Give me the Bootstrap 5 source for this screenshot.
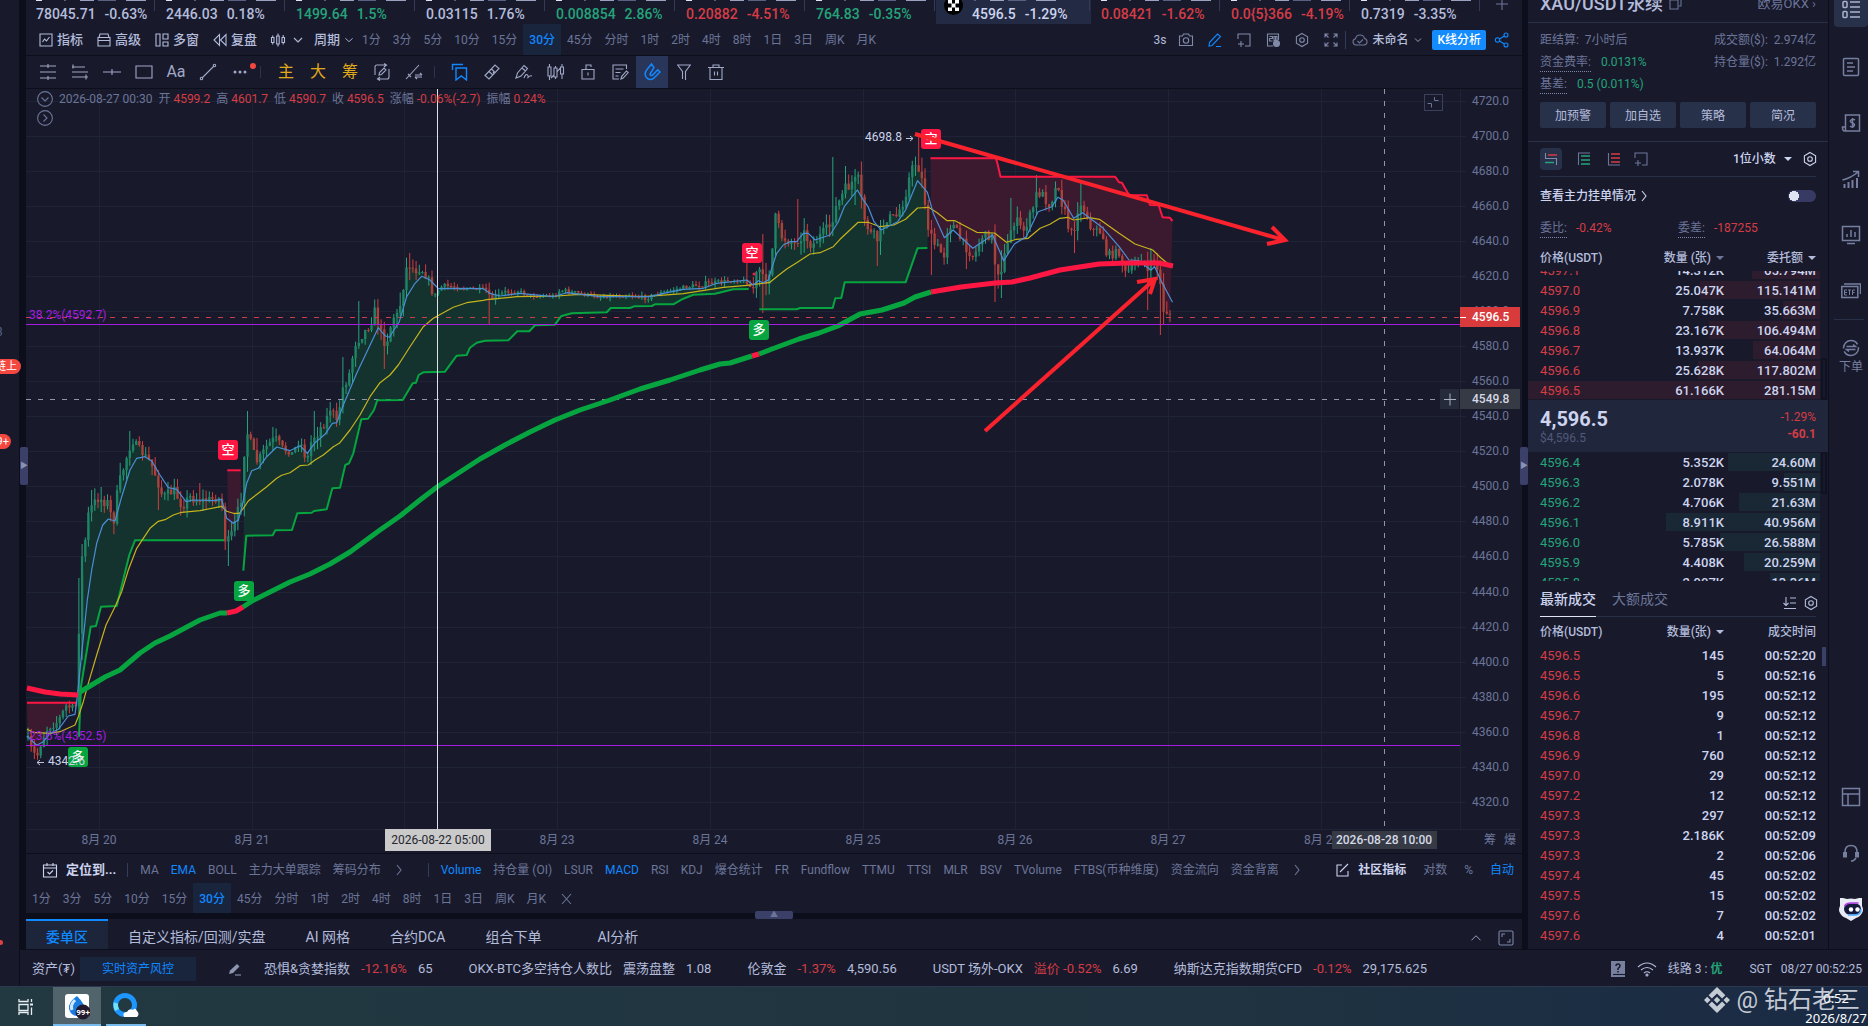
<!DOCTYPE html>
<html lang="zh-CN" data-bs-theme="dark">
<head>
<meta charset="utf-8">
<meta name="viewport" content="width=device-width, initial-scale=1">
<title>XAU/USDT永续</title>
<link rel="stylesheet" href="https://cdn.jsdelivr.net/npm/bootstrap@5.3.0/dist/css/bootstrap.min.css">
<style>
:root{--bg:#181a2c;--gap:#0c0f1b;--line:#28314a;--dim:#6c7598;--txt:#b4bcdb;--lit:#cdd4ef;--blue:#1088ff;--up:#25a37a;--dn:#d63c44}
body{background:var(--gap);color:var(--dim);font:12px/18px Roboto,"Noto Sans CJK SC",sans-serif;height:100vh;overflow:hidden}
button,select{background:none;border:0;padding:0;color:inherit;font:inherit;flex:none}
a{color:inherit;text-decoration:none}
svg.ic{width:16px;height:16px;fill:none;stroke:currentColor;stroke-width:1.1;flex:none;display:block}
.pane{background:var(--bg)}
.up{color:var(--up)!important}.dn{color:var(--dn)!important}.blue{color:var(--blue)!important}.txt{color:var(--txt)}.lit{color:var(--lit)}
.side-l{width:20px;border-right:1px solid var(--gap)}
.gutter{width:6px;flex:none}
.handle{width:8px;height:38px;background:#3b4069;border-radius:2px;top:447px;z-index:4;color:#8b92b5;font-size:8px;line-height:38px;text-align:center}
.over{position:absolute}
/* ticker */
.ticker{height:24px;overflow:hidden}
.tick{flex:0 0 130px;height:24px;padding:5px 0 0 10px;font-size:14px;font-weight:500;color:var(--txt);position:relative;white-space:nowrap}
.tick::before{content:"";position:absolute;left:10px;top:0;width:110px;height:1px;background:linear-gradient(90deg,#dfe4f5 0 6px,transparent 6px 28px,#596182 28px 30px,transparent 30px 44px,#9aa2c0 44px 58px,transparent 58px 62px,#596182 62px 80px,transparent 80px 90px,#9aa2c0 90px)}
.tick::after{content:"";position:absolute;right:1px;top:0;width:1px;height:11px;background:#323a58}
.tick span{margin-left:9px}
.tick.on{flex-basis:155px;background:#232a43;color:var(--lit);padding-left:36px}
.coin{left:8px;top:-4px;width:19px;height:19px}
/* bars */
.bar2{height:32px;border-bottom:1px solid var(--gap)}
.bar3{height:33px;border-bottom:1px solid var(--gap);padding-left:6px}
.menu-b{display:flex;align-items:center;gap:3px;font-size:13px;font-weight:500;color:var(--txt);margin-right:13px}
.per button{padding:1px 6px 0;height:100%}
.per .on,.ind .on{color:var(--blue)}
.per .on{background:#19243d;font-weight:500}
.tbtn{width:32px;height:32px;display:flex;align-items:center;justify-content:center;color:#a0a8c6;font-size:16px}
.tbtn svg.ic{width:18px;height:18px}
.tbtn.on{background:#2a3659;color:var(--blue)}
.tsep{width:10px;height:12px;border-left:1px solid #2c3350}
.vs{width:1px;height:14px;background:#343c5c;flex:none}
.btn-k{background:#148bff;color:#fff;border-radius:2px;height:20px;padding:0 5px;font-weight:500}
/* chart */
.chart{flex:1 1 0;min-height:0;border-bottom:1px solid var(--gap);position:relative}
.chart>svg{position:absolute;inset:0;width:100%;height:100%;font-family:Roboto,"Noto Sans CJK SC",sans-serif;font-size:12px}
.ohlc{left:11px;top:1px;z-index:2;white-space:nowrap}
.ohlc b{font-weight:400;color:var(--dn)}
.ind{height:29px;padding:2px 8px 0 16px}
.ind button{padding:0 6px}
.tabs{height:30px}
.tabs button{padding:6px 20px 0;font-size:14px;height:100%;color:var(--txt)}
.tabs .on{background:#1c2539;color:var(--blue);border-top:2px solid var(--blue);padding-top:4px;font-weight:500}
.status{height:37px;border-top:1px solid var(--gap);font-size:13px;color:var(--txt);white-space:nowrap}
.grp{display:flex;gap:11px;margin-right:36px}
.risk{background:#19243d;color:var(--blue);height:24px;width:116px;font-size:12px}
/* right pane */
.rp{width:300px;flex:none}
.in{padding-left:12px;padding-right:12px}
.hr1{height:1px;background:var(--line)}
.inst{height:22px;overflow:hidden}
.inst h1{font-size:18px;line-height:20px;font-weight:500;margin:-6px 0 0;color:var(--txt)}
.kv{height:22px}
.dot{border-bottom:1px dotted #7d86a6}
.act{flex:1;height:26px;background:#28314a;color:var(--txt);border-radius:2px;padding-top:1px}
.book{width:300px;table-layout:fixed;margin:0;font-size:13px;border-collapse:collapse;color:var(--lit)}
.book td,.book th{padding:2px 0 0;height:20px;line-height:18px;text-align:right;font-weight:400}
.book td:first-child,.book th:first-child{text-align:left;padding-left:12px;width:96px}
.book td:nth-child(2){width:100px;font-weight:500}
.book td:last-child,.book th:last-child{padding-right:12px;width:104px}
.book td:last-child{font-weight:500}
.book th{font-size:12px;height:28px;color:var(--txt);font-weight:500}
.book th:nth-child(2){width:100px}
.ask tr{background:linear-gradient(#2c1c2d,#2c1c2d) no-repeat right 8px center/var(--w) 18px}
.bid tr{background:linear-gradient(#1a2835,#1a2835) no-repeat right 8px center/var(--w) 18px}
.clip{height:129px;overflow:hidden;position:relative}
.mid{height:52px;background:#20263c}
.hd{height:28px;padding-top:2px;color:var(--txt);font-weight:500}
.hd>*:first-child{flex:1}.hd>*:nth-child(2){width:100px;text-align:right}.hd>*:last-child{width:92px;text-align:right}
.caret{display:inline-block;border:4px solid transparent;border-top-color:currentColor;border-bottom:0;vertical-align:2px;margin-left:5px}
.form-check-input.tg{width:28px;height:12px;margin:0;background-color:#373b63;border:0;box-shadow:none;border-radius:6px;background-image:radial-gradient(circle,#dfe3f2 5px,transparent 5px);background-size:12px 12px;background-position:left center;background-repeat:no-repeat}
.dec{color:var(--lit);font-weight:500;appearance:none;width:43px}
.tabs2{height:35px;font-size:14px}
.tabs2 button{height:36px;position:relative}
.tabs2 .on{color:var(--lit);font-weight:500;border-bottom:1px solid #dfe4f5}
.rail{width:40px;border-left:1px solid var(--gap);flex:none;color:#767f9f;padding-left:5px}
.rail button{height:56px;width:34px;display:flex;align-items:center;justify-content:center}
.rail svg.ic{width:20px;height:20px;stroke-width:1.5}
.rail .on{height:27px;background:#28314a;border-radius:0 0 4px 4px;padding-bottom:8px;color:#aab2d0}
.task{height:40px;background:linear-gradient(90deg,#223941,#203540 45%,#1f3340 65%,#1a2a45);border-top:1px solid #2a3850}
.app{width:48px;height:39px;display:flex;align-items:center;justify-content:center;border-bottom:2px solid #76b9ed}
.wm{right:8px;top:-7px;font-size:24px;line-height:40px;color:rgba(235,238,245,.82);white-space:nowrap}
.clock{right:1px;top:1px;color:#fff;font:13px/20px "Noto Sans",sans-serif}
.pill{background:#f4473f;color:#fff;border-radius:0 8px 8px 0;font-size:11px;line-height:15px;height:15px;padding-right:4px;overflow:hidden;display:flex;justify-content:flex-end;white-space:nowrap;left:0}
</style>
<script src="https://cdn.jsdelivr.net/npm/bootstrap@5.3.0/dist/js/bootstrap.bundle.min.js"></script>
</head>
<body class="d-flex flex-column">
<svg width="0" height="0" class="position-absolute" aria-hidden="true">
 <symbol id="i-ind" viewBox="0 0 16 16"><path d="M2 2h12v12H2zM4.500 10l2-3 2 2 3-4"/></symbol>
 <symbol id="i-adv" viewBox="0 0 16 16"><path d="M2 5.500h12V14H2zM3 5.500L4 2h8l1 3.500M2 8.500h12"/></symbol>
 <symbol id="i-win" viewBox="0 0 16 16"><path d="M2 2h4v12H2zM9 2h5v5H9zM9 10h5v4H9z"/></symbol>
 <symbol id="i-rew" viewBox="0 0 16 16"><path d="M7.500 2.500v11L2 8zM14 2.500v11L8.500 8z"/></symbol>
 <symbol id="i-cdl" viewBox="0 0 16 16"><path d="M1.500 5.500h2.500v5H1.500zM2.700 3.500v2M2.700 10.500v2M6.700 4h2.500v8H6.700zM8 1.500V4M8 12v2.500M12 5.500h2.500v5H12zM13.200 3v2.500M13.200 10.500v2"/></symbol>
 <symbol id="i-dn" viewBox="0 0 16 16"><path d="M4 6l4 4 4-4"/></symbol>
 <symbol id="i-rt" viewBox="0 0 16 16"><path d="M6 3l4 5-4 5"/></symbol>
 <symbol id="i-upc" viewBox="0 0 16 16"><path d="M2 11l6-6 6 6"/></symbol>
 <symbol id="i-cam" viewBox="0 0 16 16"><path d="M1.500 4h3l1-2h5l1 2h3v9.500h-13z"/><circle cx="8" cy="8.500" r="2.700"/></symbol>
 <symbol id="i-pen" viewBox="0 0 16 16"><path d="M2.500 10.500l8-8.500 3 2.500-8.500 9-3 .5zM9 14.500h5"/></symbol>
 <symbol id="i-add" viewBox="0 0 16 16"><path d="M2 7V2h12v12H9M5 9v6M2 12h6"/></symbol>
 <symbol id="i-dan" viewBox="0 0 16 16"><path d="M13.500 8V2h-11v12H8M4.500 4.500h3v2h-3v2.500h3M9 4.500h3v4H9zM10.500 4v6"/><circle cx="11.500" cy="11.500" r="3" fill="currentColor"/></symbol>
 <symbol id="i-hex" viewBox="0 0 16 16"><path d="M8 1.500l5.600 3.200v6.600L8 14.500l-5.600-3.200V4.700z"/><circle cx="8" cy="8" r="2.300"/></symbol>
 <symbol id="i-ful" viewBox="0 0 16 16"><path d="M2 5.500V2h3.500M2 2l3.500 3.500M10.500 2H14v3.500M14 2l-3.500 3.500M2 10.500V14h3.500M2 14l3.500-3.500M14 10.500V14h-3.500M14 14l-3.500-3.500"/></symbol>
 <symbol id="i-cld" viewBox="0 0 16 16"><path d="M4 13a3.200 3.200 0 01-.5-6.300 4.600 4.600 0 019-.2A3.300 3.300 0 0112 13zM5.500 9l2 2 3.500-3.500"/></symbol>
 <symbol id="i-shr" viewBox="0 0 16 16"><circle cx="3.500" cy="8" r="2.200"/><circle cx="12" cy="3" r="2"/><circle cx="12" cy="13" r="2"/><path d="M5.500 7l4.800-3M5.500 9l4.800 3"/></symbol>
 <symbol id="t1" viewBox="0 0 18 18"><path d="M1 3h16M1 9h16M1 15h16M9 1v4M9 13v4"/></symbol>
 <symbol id="t2" viewBox="0 0 18 18"><path d="M1 4h13M1 9h16M1 14h16M15 11.500v5M2 1.500v4"/></symbol>
 <symbol id="t3" viewBox="0 0 18 18"><path d="M0 9h18M9 6v6"/></symbol>
 <symbol id="t4" viewBox="0 0 18 18"><path d="M1 3h16v12H1z"/></symbol>
 <symbol id="t6" viewBox="0 0 18 18"><path d="M3 15L15 3"/><circle cx="2.500" cy="15.500" r="1.200"/><circle cx="15.500" cy="2.500" r="1.200"/></symbol>
 <symbol id="t7" viewBox="0 0 18 18"><g fill="currentColor" stroke="none"><circle cx="4" cy="9" r="1.500"/><circle cx="9" cy="9" r="1.500"/><circle cx="14" cy="9" r="1.500"/></g></symbol>
 <symbol id="t8" viewBox="0 0 18 18"><path d="M2 12V4q0-2 2-2h9M11 .5L13.500 2 11 4M16 6v8q0 2-2 2H5M7 14l-2.500 2L7 17.500M6 12l.5-2.500L11 5l2 2-4.500 4.500z"/></symbol>
 <symbol id="t9" viewBox="0 0 18 18"><path d="M1 16L14 2M3 11l3 3M10 12h7M15 10l2 2M17 14h-7M12 16l-2-2"/></symbol>
 <symbol id="t10" viewBox="0 0 18 18"><path stroke-width="1.400" d="M1.500 7V1.500H12M5 5h10.500v12l-5.200-4L5 17z"/></symbol>
 <symbol id="t11" viewBox="0 0 18 18"><path d="M2 12.500L12 2l4 3.500L6 16zM8.500 6l3.500 3.500M6 8.500l4 3.500M10 10l1-1"/></symbol>
 <symbol id="t12" viewBox="0 0 18 18"><path d="M1 15l1.500-5L9 2.500l3.500 3L6 13zM7 5l3.500 3M9 15q2-5 3.500-3t0 3q2-3 4.500-2"/></symbol>
 <symbol id="t13" viewBox="0 0 18 18"><path d="M1 4h3v9H1zM2.500 1v3M2.500 13v4M7 5h3v9H7zM8.500 3v2M8.500 14v2M13.500 4h3v7h-3zM15 1v3M15 11v5M4 15l3-3M10 9l4-5"/></symbol>
 <symbol id="t14" viewBox="0 0 18 18"><path d="M3 6.500h12V16H3zM7 6.500V2h5v2M9 9.500v3"/></symbol>
 <symbol id="t15" viewBox="0 0 18 18"><path d="M15.500 6V2H2v14h6M4.500 6h8M4.500 9.500h5M4.500 13h3M10 16l.7-2.700L15.500 8l1.700 1.600-5 5.400z"/></symbol>
 <symbol id="t16" viewBox="0 0 18 18"><path stroke-width="1.500" d="M8.500 1L4 6.500c-3 3.800-2 7.500.5 9 2.300 1.400 5.200 1 7-1L17 9l-2.200-2.200-5.300 5.300c-1.300 1.200-3.200-.4-2-1.900L11 4.500z"/></symbol>
 <symbol id="t17" viewBox="0 0 18 18"><path d="M2 2h14M3 2.500l4.500 6V16M15 2.500l-4.500 6V17"/></symbol>
 <symbol id="t18" viewBox="0 0 18 18"><path d="M1 4.500h16M6 4.500V2h6v2.500M3 4.500V16.500h12V4.500M7.500 8.500v4M10.500 8.500v4"/></symbol>
 <symbol id="i-cal" viewBox="0 0 16 16"><path d="M1.500 3h13v12h-13zM1.500 6h13M5 1v3M11 1v3M5.500 10l2 2 3.500-3.500"/></symbol>
 <symbol id="i-edt" viewBox="0 0 16 16"><path d="M8 3H3v11h11V9M6 10l8-8"/></symbol>
 <symbol id="i-x" viewBox="0 0 16 16"><path d="M4 3l9 10M13 3L4 13"/></symbol>
 <symbol id="i-box" viewBox="0 0 16 16"><rect x="1" y="1" width="14" height="14" rx="1.500"/><path d="M4 7V4h3M12 9v3H9"/></symbol>
 <symbol id="r1" viewBox="0 0 20 20"><rect x="2" y="1.500" width="4" height="6" rx="1"/><rect x="2" y="11.500" width="4" height="6" rx="1"/><path d="M9 2h10M9 7h10M9 12h10M9 17h10"/></symbol>
 <symbol id="r2" viewBox="0 0 20 20"><rect x="2.500" y="1.500" width="15" height="17" rx="1"/><path d="M6 6h6M6 10h8M6 14h6"/></symbol>
 <symbol id="r3" viewBox="0 0 20 20"><path d="M4.500 14V2h14v16h-15q-2 0-2-4h3v4"/><path d="M14 7q-2-1.500-4 0t1.500 3q3 1 1.500 3t-4 0M11.500 5v10"/></symbol>
 <symbol id="r4" viewBox="0 0 20 20"><path stroke-width="2" d="M3.500 19v-4M7.500 19v-6M11.500 19v-8M16 19V9"/><path d="M1.500 11Q10 9 17 3M12 2.500h5.500V8"/></symbol>
 <symbol id="r5" viewBox="0 0 20 20"><path d="M1.500 1.500h17v14h-17zM6 18.500h8M6 12V9M10 12V5M14 12V7"/></symbol>
 <symbol id="r6" viewBox="0 0 20 20"><path d="M.8 5.500h16v11H.8zM3 3h16.500v10"/><path stroke-width="1" d="M6 9H3.500v5H6M3.500 11.500H6M7 9h3M8.500 9v5M14 9h-2.500v5M11.500 11.500h2"/></symbol>
 <symbol id="r7" viewBox="0 0 20 20"><circle cx="10" cy="10" r="7.500" stroke-dasharray="20 3"/><path d="M5.500 8.500h9l-2.500-2M14.500 11.500h-9l2.500 2"/></symbol>
 <symbol id="r8" viewBox="0 0 20 20"><path d="M1.500 1.500h17v17h-17zM1.500 7h17M7 7v11.500"/></symbol>
 <symbol id="r9" viewBox="0 0 20 20"><path d="M4 9q0-6.500 6-6.500T16 9M15 15q-2 3-5 3"/><path stroke-width="4" d="M4 9v5.500M16 9v5.500"/></symbol>
 <symbol id="r10" viewBox="0 0 24 24"><path fill="#e8ebf5" stroke="none" d="M1 1h3l4 1q4-1 8 0l4-1h3v8q2 4 0 7-2 4-6 5l-5 3-5-3q-4-1-6-5-2-3 0-7z"/><rect x="5" y="6.500" width="17" height="11" rx="5.500" fill="#151a3c" stroke="none"/><path d="M5.500 9q2-3 6-3h8" stroke="#b13ce8" fill="none" stroke-width="1.500"/><path d="M22 12q0 5-5 6h-8" stroke="#4aa8ff" fill="none" stroke-width="1.500"/><circle cx="12" cy="12.500" r="2.200" fill="#fff" stroke="none"/><circle cx="18.500" cy="12.500" r="2.200" fill="#fff" stroke="none"/></symbol>
</svg>

<main class="d-flex flex-fill position-relative" style="min-height:0">
 <aside class="side-l pane position-relative flex-shrink-0">
  <span class="over" style="left:-4px;top:323px;color:#56608c">3</span>
  <span class="over pill" style="width:21px;top:359px">链上</span>
  <span class="over pill" style="width:11px;top:434px;padding-right:2px">9+</span>
  <span class="over" style="left:0;top:940px;width:3px;height:5px;background:#e04040;border-radius:0 3px 3px 0"></span>
 </aside>
 <div class="d-flex flex-column flex-fill" style="min-width:0">
  <div class="d-flex flex-fill" style="min-height:0">
   <div class="gutter position-relative"><div class="handle over" style="left:0">▶</div></div>
   <section class="d-flex flex-column flex-fill" style="min-width:0">
    <div class="pane ticker d-flex" id="ticker"></div>
    <div class="pane bar2 d-flex align-items-center pe-2" style="padding-left:12px">
     <button class="menu-b"><svg class="ic"><use href="#i-ind"/></svg>指标</button>
     <button class="menu-b"><svg class="ic"><use href="#i-adv"/></svg>高级</button>
     <button class="menu-b"><svg class="ic"><use href="#i-win"/></svg>多窗</button>
     <button class="menu-b"><svg class="ic"><use href="#i-rew"/></svg>复盘</button>
     <button class="menu-b me-2 gap-1" aria-label="K线类型"><svg class="ic"><use href="#i-cdl"/></svg><svg class="ic"><use href="#i-dn"/></svg></button>
     <button class="menu-b me-0" style="gap:2px">周期<svg class="ic" style="width:14px"><use href="#i-dn"/></svg></button>
     <div class="per d-flex h-100" data-periods></div>
     <div class="ms-auto d-flex align-items-center gap-3">
      <button class="txt">3s</button>
      <div class="d-flex align-items-center" style="gap:13px;color:#8089a8;margin-left:-4px">
      <button aria-label="截图"><svg class="ic"><use href="#i-cam"/></svg></button>
      <button class="blue" aria-label="画线"><svg class="ic"><use href="#i-pen"/></svg></button>
      <button aria-label="添加"><svg class="ic"><use href="#i-add"/></svg></button>
      <button aria-label="弹幕"><svg class="ic"><use href="#i-dan"/></svg></button>
      <button aria-label="设置"><svg class="ic"><use href="#i-hex"/></svg></button>
      <button aria-label="全屏"><svg class="ic"><use href="#i-ful"/></svg></button>
      </div>
      <button class="d-flex align-items-center gap-1 txt fw-medium" style="margin-left:-10px;padding-left:6px;border-left:1px solid #343c5c"><svg class="ic" style="color:#6c7598"><use href="#i-cld"/></svg>未命名<svg class="ic" style="width:12px"><use href="#i-dn"/></svg></button>
      <button class="btn-k" style="margin-left:-8px">K线分析</button>
      <button class="blue me-1" style="margin-left:-8px" aria-label="分享"><svg class="ic"><use href="#i-shr"/></svg></button>
     </div>
    </div>
    <div class="pane bar3 d-flex align-items-center" id="tools"></div>

    <div class="pane chart">
     <svg id="plot" viewBox="26 89 1496 764" preserveAspectRatio="xMinYMin slice" role="img" aria-label="XAU/USDT 30分 K线图"></svg>
     <div class="ohlc over">
      <div class="d-flex align-items-center gap-1"><svg class="ic"><circle cx="8" cy="8" r="7.400"/><path d="M4.500 6.500L8 10l3.500-3.500"/></svg><span style="margin-left:2px">2026-08-27 00:30&nbsp; 开 <b>4599.2</b>&nbsp; 高 <b>4601.7</b>&nbsp; 低 <b>4590.7</b>&nbsp; 收 <b>4596.5</b>&nbsp; 涨幅 <b>-0.06%(-2.7)</b>&nbsp; 振幅 <b>0.24%</b></span></div>
      <svg class="ic" style="margin-top:2px"><circle cx="8" cy="8" r="7.400"/><path d="M6.500 4.500L10 8l-3.500 3.500"/></svg>
     </div>
    </div>

    <div class="pane ind d-flex align-items-center text-nowrap">
     <button class="p-0 d-flex align-items-center gap-2 lit fw-bold" style="font-size:13px"><svg class="ic"><use href="#i-cal"/></svg>定位到...</button>
     <span class="vs" style="margin:0 6px 0 11px"></span>
     <button>MA</button><button class="on">EMA</button><button>BOLL</button><button>主力大单跟踪</button><button>筹码分布</button>
     <button aria-label="更多" class="p-0 ms-1"><svg class="ic"><use href="#i-rt"/></svg></button><span class="vs" style="margin:0 6px 0 21px"></span>
     <div class="d-flex" id="sub"></div>
     <button aria-label="更多" class="p-0 ms-1"><svg class="ic"><use href="#i-rt"/></svg></button>
     <div class="ms-auto d-flex align-items-center" style="gap:7px"><button class="d-flex align-items-center gap-2 lit fw-bold px-0"><svg class="ic"><use href="#i-edt"/></svg>社区指标</button><button class="ms-1">对数</button><button class="px-0 mx-1">%</button><button class="on pe-0">自动</button></div>
    </div>
    <div class="pane per d-flex align-items-center" style="height:30px"><div class="d-flex h-100" data-periods></div><button aria-label="关闭"><svg class="ic"><use href="#i-x"/></svg></button></div>
    <div class="position-relative" style="height:6px"><div class="over" style="left:729px;top:-2px;width:38px;height:8px;background:#3b4069;border-radius:2px;font-size:8px;line-height:8px;text-align:center">▲</div></div>
    <div class="pane tabs d-flex align-items-center">
     <button class="on">委单区</button><button>自定义指标/回测/实盘</button><button>AI 网格</button><button>合约DCA</button><button class="me-3">组合下单</button><button>AI分析</button>
     <div class="ms-auto d-flex pt-2 me-2 txt" style="gap:16px"><svg class="ic" style="width:12px"><use href="#i-upc"/></svg><svg class="ic" style="color:#7d86a6"><use href="#i-box"/></svg></div>
    </div>
   </section>
   <div class="gutter position-relative"><div class="handle over" style="right:0">▶</div></div>

   <section class="rp pane d-flex flex-column overflow-hidden">
    <div class="inst in d-flex justify-content-between"><div class="d-flex"><h1>XAU/USDT永续</h1><svg class="ic ms-1" style="margin-top:-4px"><path d="M3 4h8v9H3zM6 2h8v8h-2"/></svg></div><a href="#" style="font-size:13px;margin-top:-5px">欧易OKX&nbsp;›</a></div>
    <div class="hr1"></div>
    <div class="in" style="padding-top:6px">
     <div class="kv d-flex align-items-center justify-content-between"><span>距结算:&nbsp; 7小时后</span><span>成交额($):&nbsp; 2.974亿</span></div>
     <div class="kv d-flex align-items-center justify-content-between"><span><span class="dot d-inline-block" style="margin-right:10px">资金费率:</span><span class="up">0.0131%</span></span><span>持仓量($):&nbsp; 1.292亿</span></div>
     <div class="kv d-flex align-items-center"><span class="dot" style="margin-right:10px">基差:</span><span class="up">0.5 (0.011%)</span></div>
     <div class="d-flex gap-1" style="margin:7px 0 13px"><button class="act">加预警</button><button class="act">加自选</button><button class="act">策略</button><button class="act">简况</button></div>
    </div>
    <div class="hr1"></div>
    <div class="in d-flex align-items-center" style="height:34px;gap:14px">
     <button class="rounded-1" style="background:#28314a;padding:3px" aria-label="全部盘口"><svg class="ic"><path d="M2.500 2v5.500h11V14" stroke="#8089a8"/><path d="M5 4h9" stroke="#d63c44" stroke-width="1.500"/><path d="M2 11.500h9" stroke="#25a37a" stroke-width="1.500"/></svg></button>
     <button aria-label="买盘"><svg class="ic"><path d="M14 2H2.500v12"/><path d="M5 5h9M5 9h9M5 13h9" stroke="#25a37a" stroke-width="1.400"/></svg></button>
     <button aria-label="卖盘"><svg class="ic"><path d="M2.500 2v12H14"/><path d="M5 3h9M5 7h9M5 11h9" stroke="#d63c44" stroke-width="1.400"/></svg></button>
     <button style="margin-left:-3px" aria-label="添加"><svg class="ic"><use href="#i-add"/></svg></button>
     <div class="ms-auto d-flex align-items-center lit"><select class="dec" aria-label="小数位数"><option>1位小数</option></select><span class="caret" style="margin:0 10px 0 8px"></span><svg class="ic" style="margin-right:-2px"><use href="#i-hex"/></svg></div>
    </div>
    <div class="hr1" style="margin:0 12px"></div>
    <div class="in d-flex align-items-center justify-content-between" style="height:36px;padding-top:1px"><label for="tg" class="lit fw-medium d-flex align-items-center">查看主力挂单情况<svg class="ic"><use href="#i-rt"/></svg></label><input id="tg" class="form-check-input tg" type="checkbox" role="switch"></div>
    <div class="in d-flex align-items-center" style="height:30px"><span style="width:138px"><span class="dot d-inline-block" style="margin-right:9px">委比:</span><span class="dn">-0.42%</span></span><span><span class="dot d-inline-block" style="margin-right:9px">委差:</span><span class="dn">-187255</span></span></div>
    <div class="in hd d-flex align-items-center"><span>价格(USDT)</span><span>数量 (张)<span class="caret" style="color:#6c7598"></span></span><span>委托额<span class="caret"></span></span></div>
    <div class="clip d-flex align-items-end"><table class="book ask"><tbody id="asks"></tbody></table><span class="over" style="right:1px;top:87px;width:6px;height:42px;border:2px solid #0f1220"></span></div>
    <div class="mid in d-flex justify-content-between align-items-center"><div><div class="lit fw-bold" style="font-size:20px;line-height:24px">4,596.5</div><div style="line-height:14px;font-size:12px;color:#505979">$4,596.5</div></div><div class="dn text-end" style="font-size:12px;line-height:17px">-1.29%<br><b>-60.1</b></div></div>
    <div class="clip"><table class="book bid"><tbody id="bids"></tbody></table><span class="over" style="right:1px;top:0;width:6px;height:42px;border:2px solid #0f1220"></span></div>
    <div class="in"><div class="tabs2 d-flex gap-3"><button class="on">最新成交</button><button>大额成交</button><span class="ms-auto d-flex align-items-center txt pt-2" style="gap:5px;margin-right:-3px"><svg class="ic"><path d="M4 2v8M1.500 8L4 10.500 6.500 8M8 3h6M8 8h6M2 13.500h12"/></svg><svg class="ic"><use href="#i-hex"/></svg></span></div></div>
    <div class="hr1" style="margin:0 12px"></div>
    <div class="position-relative"><table class="book"><thead><tr><th>价格(USDT)</th><th>数量(张)<span class="caret"></span></th><th>成交时间</th></tr></thead><tbody id="trades"></tbody></table><span class="over" style="right:2px;top:30px;width:4px;height:19px;background:#3b4069"></span></div>
   </section>
   <nav class="rail pane d-flex flex-column">
    <button class="on" aria-label="盘口"><svg class="ic"><use href="#r1"/></svg></button>
    <button style="margin-top:12px" aria-label="资讯"><svg class="ic"><use href="#r2"/></svg></button>
    <button aria-label="资金"><svg class="ic"><use href="#r3"/></svg></button>
    <button aria-label="行情"><svg class="ic"><use href="#r4"/></svg></button>
    <button aria-label="数据"><svg class="ic"><use href="#r5"/></svg></button>
    <button aria-label="ETF"><svg class="ic"><use href="#r6"/></svg></button>
    <div class="hr1 me-1"></div>
    <button class="flex-column" style="height:74px"><svg class="ic"><use href="#r7"/></svg><span>下单</span></button>
    <button class="mt-auto" aria-label="布局"><svg class="ic"><use href="#r8"/></svg></button>
    <button aria-label="客服"><svg class="ic"><use href="#r9"/></svg></button>
    <button style="margin-bottom:12px" aria-label="AI助手"><svg class="ic" style="width:24px;height:24px"><use href="#r10"/></svg></button>
   </nav>
  </div>
  <footer class="status pane d-flex align-items-center" style="padding:1px 6px 0 12px">
   <span style="width:48px">资产(₮)</span><button class="risk">实时资产风控</button>
   <svg class="ic" style="margin:0 21px 0 31px;fill:#8d95b3;stroke:#8d95b3"><path d="M2 13l1-3.500L10 3l2.500 2.500L6 12z" stroke="none"/><path d="M8 14h6"/></svg>
   <div class="grp"><span>恐惧&amp;贪婪指数</span><span class="dn">-12.16%</span><span>65</span></div>
   <div class="grp"><span>OKX-BTC多空持仓人数比</span><span>震荡盘整</span><span>1.08</span></div>
   <div class="grp"><span>伦敦金</span><span class="dn">-1.37%</span><span>4,590.56</span></div>
   <div class="grp"><span>USDT 场外-OKX</span><span class="dn">溢价 -0.52%</span><span>6.69</span></div>
   <div class="grp"><span>纳斯达克指数期货CFD</span><span class="dn">-0.12%</span><span>29,175.625</span></div>
   <div class="ms-auto d-flex align-items-center" style="font-size:12px;gap:11px">
    <svg class="ic"><path d="M1 0h14v16H1z" fill="#77809f" stroke="none"/><path d="M3 13.500h12" stroke="#181a2c"/><path d="M6 5q0-2 2-2t2 2q0 1-2 2.500V9M8 10v1.500" stroke="#181a2c" stroke-width="1.500"/></svg>
    <svg class="ic" style="width:20px" viewBox="0 0 20 16"><path d="M1 6q9-8 18 0M4 9q6-5 12 0M7 12q3-2.500 6 0"/><circle cx="10" cy="14" r="1"/></svg>
    <span>线路 3 : <span class="up fw-bold">优</span></span><span class="ms-3">SGT&nbsp;&nbsp; 08/27 00:52:25</span></div>
  </footer>
 </div>
</main>

<footer class="task d-flex position-relative">
 <button class="app border-0" style="width:50px;color:#e6ecf0" aria-label="任务视图"><svg class="ic"><path d="M2 0v2.500h9V0M2 5.500h9v6H2zM2 16v-2.500h9V16M14.500 0v3M14.500 8.500V16" stroke-width="1.300"/><path d="M13 4.500h3v2h-3z" fill="currentColor" stroke="none"/></svg></button>
 <button class="app" style="background:#51646c;margin-left:3px" aria-label="行情软件"><svg width="26" height="28" viewBox="0 0 26 28"><rect x="1" y="2" width="24" height="24" rx="3" fill="#fff"/><path d="M13 4Q4 10 5 17q2 7 8 7t8-6q0-6-8-14z" fill="#1a7be0"/><path d="M11 8q-5 5-3 10" stroke="#cfe6ff" stroke-width="3" fill="none"/><circle cx="19" cy="20" r="7.500" fill="#221a2c"/><text x="19" y="23" font-size="8" font-weight="700" fill="#fff" text-anchor="middle">99+</text></svg></button>
 <button class="app" style="width:40px;margin-left:5px" aria-label="浏览器"><svg width="26" height="26" viewBox="0 0 26 26"><circle cx="12" cy="12" r="9.500" fill="none" stroke="#1e96ff" stroke-width="5"/><path d="M4 17q-2-4-1-7" stroke="#6fe0f5" stroke-width="4.500" fill="none"/><path d="M11 24q-2-5 3-5 2-4 6-2 2-3 4 1 3 3 0 6z" fill="#fff"/></svg></button>
 <div class="over clock text-end"><div style="padding-right:18px">0:52</div><div>2026/8/27</div></div>
 <div class="over wm d-flex align-items-center"><svg width="26" height="26" viewBox="0 0 28 28" fill="currentColor" style="margin-right:6px"><path d="M14 0l9 9-3.500 3.500L14 7l-5.500 5.500L5 9zM14 28l9-9-3.500-3.500L14 21l-5.500-5.500L5 19zM14 10.500l3.500 3.500-3.500 3.500-3.500-3.500zM3.500 10.500L7 14l-3.500 3.500L0 14zM24.500 10.500L28 14l-3.500 3.500L21 14z"/></svg>@ 钻石老三</div>
</footer>

<script>
const $=s=>document.querySelector(s);
/* ticker */
const T=[['78045.71','-0.63%',''],['2446.03','0.18%',''],['1499.64','1.5%','up'],['0.03115','1.76%',''],['0.008854','2.86%','up'],['0.20882','-4.51%','dn'],['764.83','-0.35%','up'],['4596.5','-1.29%','on'],['0.08421','-1.62%','dn'],['0.0{5}366','-4.19%','dn'],['0.7319','-3.35%','']];
$('#ticker').innerHTML=T.map(t=>`<a href="#" class="tick ${t[2]}">${t[2]=='on'?'<svg class="coin over" viewBox="0 0 19 19"><circle cx="9.500" cy="9.500" r="9.500" fill="#000"/><path fill="#fff" d="M4 4h4v3.500H4zM11 4h4v3.500h-4zM7.500 7.500h4v4h-4zM4 11.500h4V15H4zM11 11.500h4V15h-4z"/></svg>':''}${t[0]}<span>${t[1]}</span></a>`).join('')+'<button class="ms-auto h-100" style="margin:-8px 12px 0 0" aria-label="新增"><svg class="ic"><path d="M2 8h12M8 2v12"/></svg></button>';
/* periods */
const P='1分,3分,5分,10分,15分,30分,45分,分时,1时,2时,4时,8时,1日,3日,周K,月K'.split(',');
document.querySelectorAll('[data-periods]').forEach(e=>e.innerHTML=P.map(p=>`<button class="${p=='30分'?'on':''}">${p}</button>`).join(''));
/* drawing tools */
const u=n=>`<svg class="ic"><use href="#t${n}"/></svg>`,y=c=>`<span style="color:#e0a91c">${c}</span>`;
const tools=[u(1),u(2),u(3),u(4),'Aa',u(6),u(7),0,y('主'),y('大'),y('筹'),u(8),u(9),0,u(10),u(11),u(12),u(13),u(14),u(15),u(16),u(17),u(18)];
$('#tools').innerHTML=tools.map((t,i)=>t===0?'<span class="tsep flex-shrink-0 ms-1"></span>':`<button class="tbtn position-relative ${i==20?'on':''} ${i==14?'blue':''}">${t}${i==6?'<i class="over rounded-circle" style="width:6px;height:6px;right:0;top:7px;background:#f4473f"></i>':''}</button>`).join('');
$('#sub').innerHTML='Volume,持仓量 (OI),LSUR,MACD,RSI,KDJ,爆仓统计,FR,Fundflow,TTMU,TTSI,MLR,BSV,TVolume,FTBS(币种维度),资金流向,资金背离'.split(',').map(s=>`<button class="${s=='Volume'||s=='MACD'?'on':''}">${s}</button>`).join('');
/* order book */
const row=(c,w)=>(r)=>`<tr style="--w:${Math.round(parseFloat(r[2])*w)}px"><td class="${c}">${r[0]}</td><td>${r[1]}</td><td>${r[2]}</td></tr>`;
$('#asks').innerHTML=[['4597.1','14.312K','65.794M'],['4597.0','25.047K','115.141M'],['4596.9','7.758K','35.663M'],['4596.8','23.167K','106.494M'],['4596.7','13.937K','64.064M'],['4596.6','25.628K','117.802M'],['4596.5','61.166K','281.15M']].map(row('dn',292/281.15)).join('');
$('#bids').innerHTML=[['4596.4','5.352K','24.60M'],['4596.3','2.078K','9.551M'],['4596.2','4.706K','21.63M'],['4596.1','8.911K','40.956M'],['4596.0','5.785K','26.588M'],['4595.9','4.408K','20.259M'],['4595.8','2.907K','13.36M']].map(row('up',154/40.956)).join('');
$('#trades').innerHTML='4596.5 145 20,4596.5 5 16,4596.6 195 12,4596.7 9 12,4596.8 1 12,4596.9 760 12,4597.0 29 12,4597.2 12 12,4597.3 297 12,4597.3 2.186K 09,4597.3 2 06,4597.4 45 02,4597.5 15 02,4597.6 7 02,4597.6 4 01'.split(',').map(s=>{const[a,b,c]=s.split(' ');return`<tr><td class="dn">${a}</td><td>${b}</td><td>00:52:${c}</td></tr>`}).join('');

/* chart */
const A=(s,ox,oy,sx)=>s.trim().split(' ').map(p=>{const[a,b]=p.split(',');return[ox+a/sx,oy+b/3]});
const a=s=>A(s,0,300,3),b=s=>A(s,350,200,3),c=s=>A(s,700,110,2.529);
const pts=l=>l.map(p=>p[0].toFixed(1)+','+p[1].toFixed(1)).join(' ');
const pl=(l,col,w)=>`<polyline points="${pts(l)}" fill="none" stroke="${col}" stroke-width="${w}" stroke-linejoin="round"/>`;
const G='#07a53f',R='#ff1744';
const yellow=[...a('81,1288 100,1297 150,1300 180,1295 225,1275 235,1250 250,1205 265,1150 290,1065 318,975 345,920 365,875 385,810 410,745 430,715 450,685 475,664 495,659 520,645 545,637 600,632 665,619 680,634 700,640 718,640 730,625 745,603 775,580 800,560 830,535 845,526 870,518 900,497 925,495 945,480 970,465 1000,440 1018,430 1050,390 1080,345 1110,290 1140,248 1170,225 1195,195 1230,140 1270,80 1300,55 1330,38 1360,22 1400,8 1450,1'),...b('410,299 500,290 620,288 690,283 880,290 1000,281 1120,262 1190,256 1260,247 1280,230 1310,207 1340,188 1380,162 1410,158 1450,140 1470,118'),...c('400,337 425,337 455,350 490,345 520,328 550,294 578,292 600,308 625,332 645,332 700,367 745,369 775,397 800,388 830,385 860,355 885,343 910,325 930,322 945,330 985,323 1010,328 1060,370 1100,402 1145,420 1165,443 1190,468')];
const blue=[...a('81,1308 110,1336 130,1325 150,1300 175,1288 205,1248 225,1243 232,1190 245,1060 262,900 275,810 290,730 308,675 325,657 345,663 365,590 390,510 410,475 435,470 455,483 480,525 505,563 530,568 558,605 580,600 640,602 665,598 680,655 700,670 715,660 725,625 740,550 755,512 775,505 800,470 830,441 870,452 900,437 922,460 945,428 975,403 997,370 1010,368 1030,315'),...b('20,520 85,383 105,407 118,412 148,365 170,290 195,250 215,229 240,240 265,266 310,265 400,266 420,280 450,288 510,280 610,290 650,278 750,290 900,290 940,280 1000,268 1060,265 1100,250 1190,240 1210,255 1225,242 1240,248 1255,240 1265,205 1280,160 1300,135 1320,125 1340,125 1360,100 1375,100 1395,120 1440,105 1465,65'),...c('365,290 398,240 412,268 425,290 440,335 458,360 500,335 520,300 550,212 575,247 590,310 618,383 640,360 690,415 740,375 768,452 795,402 825,380 855,305 890,290 905,262 918,270 945,325 968,308 1020,355 1060,410 1085,450 1110,452 1140,480 1150,470 1165,510 1195,577')];
const g1=a('237,1310 243,1160 272,980 288,978 303,920 350,918 388,765 405,721 672,721');
const g2=[...a('730,812 739,707 818,706 826,691 876,690 892,640 935,638 942,633 980,628 997,565 1020,563 1036,495 1047,490 1060,460 1084,358 1104,356 1122,330 1132,301 1208,300 1238,250 1248,248 1256,225 1270,217 1335,215 1370,167 1400,165 1410,143 1430,128 1455,122'),...b('475,421 502,394 538,394 555,376 615,374 633,349 665,340 770,337 782,324 840,324 852,319 905,318 915,313 970,313 1000,296 1030,284 1095,281 1150,268 1196,267')];
const g3=[...b('1228,328 1340,328 1350,324 1448,324 1456,295 1474,294 1484,247'),...c('366,517 520,517 550,415 575,414')];
const r1=a('81,1208 228,1208'),r2=a('682,511 722,511'),r3=c('583,145 748,145 752,160 760,200 1050,200 1060,217 1067,218 1085,255 1130,256 1138,285 1160,286 1170,322 1188,323 1195,333');
const trend=[[27,738,8],[32,752,9],[37,757,6],[42,740,7],[48,727,8],[58,722,7],[66,706,6],[74,709,6],[77,704,6],[79,620,20],[82,560,16],[86,535,12],[89,512,15],[98,498,9],[108,503,9],[113,524,12],[118,490,12],[125,462,10],[132,440,7],[140,450,7],[150,462,8],[157,478,10],[163,498,10],[174,490,8],[182,506,8],[190,497,10],[200,500,8],[210,500,8],[218,497,8],[222,506,8],[225,538,10],[229,545,14],[236,520,10],[241,500,10],[244,450,16],[247,430,15],[252,455,18],[258,462,10],[266,447,8],[275,438,8],[284,450,6],[292,453,4],[300,440,6],[307,462,8],[312,438,12],[320,429,10],[326,420,8],[331,406,8],[337,425,8],[342,390,10],[350,372,8],[355,342,12],[362,336,6],[370,323,10],[376,310,12],[382,340,14],[388,338,10],[393,315,14],[398,318,16],[403,285,14],[408,262,10],[414,270,9],[421,268,8],[428,278,7],[434,298,6],[440,287,6],[450,286,4],[470,289,3],[486,290,4],[490,300,7],[505,292,4],[518,291,3],[530,296,3],[555,296,3],[560,290,4],[600,297,3],[630,295,3],[646,298,4],[660,293,3],[685,287,3],[705,284,5],[735,280,3],[748,282,4],[752,292,10],[759,268,16],[763,284,16],[769,270,14],[773,245,14],[776,215,12],[780,235,12],[795,244,7],[803,232,12],[812,246,8],[820,236,9],[829,228,10],[835,210,12],[845,190,10],[852,182,10],[859,180,10],[863,215,14],[871,234,10],[878,240,10],[886,218,9],[896,217,7],[904,200,9],[910,175,10],[917,160,12],[921,175,14],[926,208,10],[930,240,14],[936,246,10],[944,256,8],[948,225,8],[953,225,9],[962,242,8],[974,257,9],[982,236,8],[992,236,7],[996,270,16],[1003,264,14],[1008,245,12],[1013,218,14],[1023,232,8],[1031,215,9],[1038,190,12],[1050,205,7],[1058,182,8],[1063,208,12],[1072,238,12],[1078,206,12],[1085,210,8],[1092,230,7],[1102,232,8],[1107,256,8],[1119,252,7],[1125,274,7],[1133,268,7],[1143,255,10],[1148,274,12],[1154,258,10],[1159,275,12],[1163,308,14],[1168,312,10],[1173,316,5]];
let seed=7;const rnd=()=>(seed=(seed*16807)%2147483647)/2147483647;
const at=x=>{let i=1;while(i<trend.length-1&&trend[i][0]<x)i++;const p=trend[i-1],q=trend[i],t=Math.min(1,Math.max(0,(x-p[0])/(q[0]-p[0])));return[p[1]+(q[1]-p[1])*t,p[2]+(q[2]-p[2])*t]};
const spikes=[[78,578,708],[81,544,660],[91,490,510],[101,487,512],[131,431,460],[160,470,510],[173,479,500],[201,483,505],[227,530,566],[247,411,440],[274,427,450],[314,411,450],[344,357,395],[360,301,320],[383,325,369],[411,253,280],[488,285,324],[748,258,285],[762,234,313],[799,199,240],[832,157,200],[847,166,195],[856,169,205],[876,240,266],[879,220,255],[918,137,170],[930,220,275],[965,245,269],[996,240,302],[1000,250,298],[1012,198,225],[1035,175,210],[1073,230,253],[1082,183,210],[1149,270,310],[1162,300,335]];
let up='',dn='',bu='',bd='',edge=[],open=at(27)[0];
for(let k=0;k<361;k++){const x=28+k*3.181;if(x>1173)break;const[m,v]=at(x);const cl=m+(rnd()-.5)*v*1.2;let hi=Math.min(open,cl)-rnd()*v*1.1,lo=Math.max(open,cl)+rnd()*v*1.1;for(const s of spikes)if(Math.abs(s[0]-x)<1.600){hi=Math.min(hi,s[1]);lo=Math.max(lo,s[2])}
 const w=`M${x.toFixed(1)} ${hi.toFixed(1)}V${lo.toFixed(1)}`,h=`M${x.toFixed(1)} ${Math.min(open,cl).toFixed(1)}v${Math.max(1,Math.abs(open-cl)).toFixed(1)}`;
 if(cl<open){up+=w;bu+=h}else{dn+=w;bd+=h}
 edge.push([x,(open+cl)/2]);open=cl}
const fill=(l,col)=>{const x0=l[0][0],x1=l[l.length-1][0],e=edge.filter(p=>p[0]>=x0&&p[0]<=x1+2).reverse();return`<polygon points="${pts([...l,...e])}" fill="${col}"/>`};
let s='';const Y=p=>101.3+(4720-p)*1.7525;
s+='<g stroke="#1e2436" stroke-width="1">';
for(let p=4720;p>=4320;p-=20)s+=`<path d="M26 ${Math.floor(Y(p))+.5}H1466"/>`;
for(let i=0;i<9;i++)s+=`<path d="M${Math.round(99+i*152.700)+.5} 89V829"/>`;
s+='<path d="M1460.500 89V829M26 829.500H1520"/></g><g fill="#6c7598">';
for(let p=4720;p>=4320;p-=20)s+=`<text x="1472" y="${Math.floor(Y(p))+4}">${p}.0</text>`;
for(let i=0;i<8;i++)if(i!=2)s+=`<text x="${Math.round(99+i*152.700)}" y="844" text-anchor="middle">8月 ${20+i}</text>`;
s+='<text x="1304" y="844">8月 28</text><text x="1484" y="844">筹</text><text x="1504" y="844">爆</text></g>';
s+=fill(g1,'#14332f')+fill(g2,'#14332f')+fill(g3,'#14332f')+fill(r1,'#3b1a2f')+fill(r2,'#3b1a2f')+fill(r3,'#3b1a2f');
s+=`<path d="${up}" stroke="#25a37a"/><path d="${dn}" stroke="#cf3d3e"/><path d="${bu}" stroke="#1f8466" stroke-width="2.400"/><path d="${bd}" stroke="#a8423a" stroke-width="2.400"/>`;
s+='<path d="M26 317.500H1460" stroke="#c93f45" stroke-dasharray="5 7"/><path d="M26 399.500H1440M1384.500 89V829" stroke="#9096a8" stroke-dasharray="5 7"/>';
s+=pl(g1,G,2)+pl(g2,G,2)+pl(g3,G,2)+pl(r1,R,2)+pl(r2,R,2)+pl(r3,R,2)+`<circle cx="754" cy="274" r="1.500" fill="${R}"/>`;
s+=pl(yellow,'#c6b31c',1.2)+pl(blue,'#4a8fd6',1.2);
const thick=[[R,'27,688 45,692 60,694 78,695'],[G,'80,692 90,686 105,677 120,670 140,653 155,643 170,636 185,628 200,620 220,613 227,613'],[R,'227,613 236,611 243,607'],[G,'243,607 252,601 270,592 290,582 310,574 330,564 350,552 365,541 380,530 400,516 420,500 437,487 460,472 480,459 505,445 530,432 555,420 580,410 610,400 640,389 670,380 700,370 720,364 730,363 752,356'],[R,'752,356 759,354'],[G,'759,354 772,349 799,339 819,333 838,326 860,314 882,310 904,303 915,297 931,292'],[R,'931,292 961,287 995,283 1012,282 1030,278 1060,270 1099,264 1127,263 1159,263 1173,266']];
thick.forEach(t=>s+=`<polyline points="${t[1]}" fill="none" stroke="${t[0]}" stroke-width="5" stroke-linejoin="round"/>`);
s+='<path d="M26 324.500H1460M26 745.500H1460" stroke="#a51be0"/><g fill="#a51be0"><text x="29" y="319">38.2%(4592.7)</text><text x="29" y="740">23.6%(4352.5)</text></g>';
const mk=(x,y,t,col)=>`<rect x="${x-10}" y="${y-10}" width="20" height="20" rx="3" fill="${col}"/><text x="${x}" y="${y+4}" fill="#fff" font-size="13" font-weight="500" text-anchor="middle">${t}</text>`;
s+=mk(228,450,'空',R)+mk(752,253,'空',R)+mk(931,139,'空',R)+mk(244,591,'多',G)+mk(78,757,'多',G)+mk(759,330,'多',G);
s+='<g fill="#ccd3ea"><text x="48" y="765">4342.6</text><text x="865" y="141">4698.8</text></g><path d="M44 762.500H37M40 760l-3 2.500 3 2.500M906 138.500h7M910 136l3 2.500-3 2.500" stroke="#bcc4de" fill="none"/>';
s+='<path d="M437.500 89V829" stroke="#dfe2ea"/>';
s+='<g stroke="#fa222c" stroke-width="4" fill="none"><path d="M915 134L1284 240M1272 227l13 13-18 4"/><path d="M985 431L1155 279M1137 282l18-3-5 15"/></g>';
s+='<rect x="385" y="829" width="106" height="22" fill="#cacaca"/><text x="438" y="844" text-anchor="middle" fill="#24262e">2026-08-22 05:00</text>';
s+='<rect x="1332" y="831" width="105" height="18" fill="#363a45"/><text x="1384" y="844" text-anchor="middle" fill="#d5d9e6" font-weight="500">2026-08-28 10:00</text>';
s+='<rect x="1460" y="307" width="60" height="20" fill="#d93b3d"/><path d="M1460 317.500h6" stroke="#fff"/><text x="1472" y="321" fill="#fff" font-weight="500">4596.5</text>';
s+='<rect x="1440" y="389" width="19" height="20" fill="#262b3b"/><path d="M1444 399.500h12M1450 393.500v12" stroke="#aab0c4"/><rect x="1460" y="389" width="60" height="20" fill="#363a45"/><text x="1472" y="403" fill="#d5d9e6" font-weight="500">4549.8</text>';
s+='<g fill="none" stroke="#39415f"><rect x="1424.500" y="94.500" width="18" height="16"/><path d="M1434.500 97v3.500h4M1431.500 107.500v-4h-4" stroke="#6c7598"/></g>';
$('#plot').innerHTML=s;
</script>
</body>
</html>
